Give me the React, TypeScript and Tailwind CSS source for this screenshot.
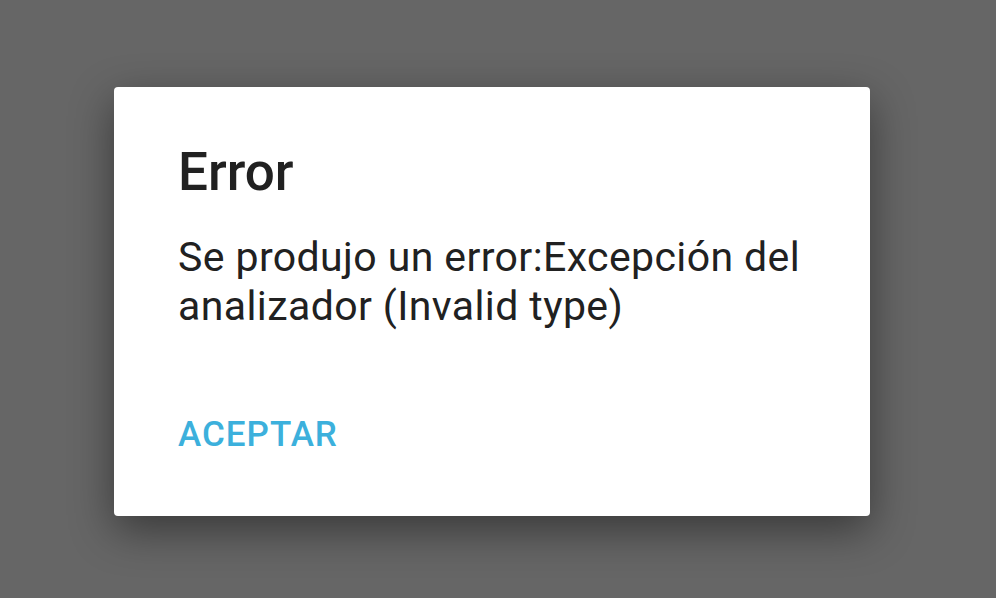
import React from "react";

export default function App() {
    return (
        <div
            className="w-[996px] h-[598px] bg-[#666666] pl-[114px] pt-[87px] overflow-hidden"
            style={{ fontFamily: "Roboto, 'Noto Sans', sans-serif" }}
        >
            <div className="w-[756px] h-[429px] bg-white rounded-[4px] shadow-[0_14px_44px_rgba(0,0,0,0.45)] flex flex-col pl-[64px] pr-[48px] pt-[53px]">
                <h1 className="text-[53px] leading-[64px] font-medium text-[#212121]">Error</h1>
                <p className="mt-[29px] text-[41px] leading-[49px] tracking-[0.4px] text-[#212121]">
                    Se produjo un error:Excepción del analizador (Invalid type)
                </p>
                <div className="mt-[84px]">
                    <button className="text-[35px] leading-[40px] font-medium tracking-[1px] text-[#3cb0dc] uppercase">
                        Aceptar
                    </button>
                </div>
            </div>
        </div>
    );
}
